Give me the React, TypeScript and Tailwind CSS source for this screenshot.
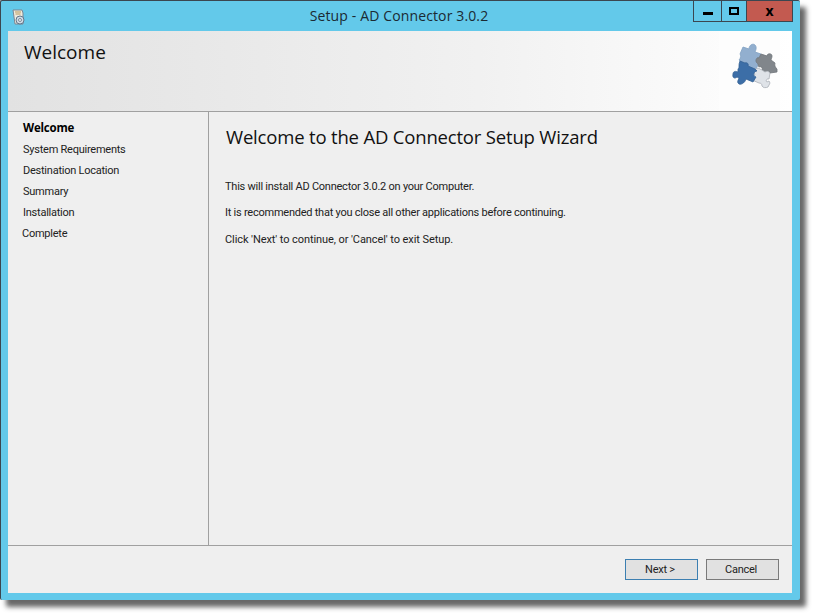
const steps = ["System Requirements", "Destination Location", "Summary", "Installation", "Complete"];
const font = "font-['Open_Sans',sans-serif]";
const small = "font-['Roboto',sans-serif] text-[11px] tracking-[-0.24px]";

function SetupIcon() {
  return (
    <svg width="16" height="18" viewBox="0 0 16 18" className="ml-[10px] mt-[7px]">
      <path d="M2 2h9l1 3v11H4z" fill="#eee9dc" stroke="#7b8794" />
      <path d="M4 4h6M4.500 6h5" stroke="#b99a5e" />
      <circle cx="9" cy="12" r="4" fill="#cfdbe6" stroke="#64778a" />
      <circle cx="9" cy="12" r="1.500" fill="#f4f6f8" stroke="#7c8b99" />
    </svg>
  );
}

function PuzzleIcon() {
  return (
    <svg width="60" height="60" viewBox="0 0 60 60">
      {/* light blue */}
      <path d="M18 9L24 11C24 7 28 5 30 7C32 9 31 12 30 14L36 16L34 20C32 19 31 21 31 23C31 25 34 26 33 27L30 33L22 29C23 26 20 24 18 25C17 25 16 26 16 24L14 22C16 20 16 17 15 16Z" fill="#92afcf" stroke="#7f9fc2" strokeWidth="0.8" />
      {/* gray */}
      <path d="M36 16L42 18C42 15 47 15 47 18C47 20 46 21 46 22L50 25C49 28 51 30 52 31L52 34L45 35C44 33 41 33 40 34L37 32C38 30 36 28 34 29L33 27C34 26 31 25 31 23C31 21 32 19 34 20Z" fill="#81868b" stroke="#6e7479" strokeWidth="0.8" />
      {/* white */}
      <path d="M33 30L37 32L40 34C41 33 44 33 45 35L44 41C42 40 40 43 42 44L44 43L45 45L43 49C41 50 38 50 37 48C37 46 36 45 34 45L27 42L30 36C28 35 29 31 31 31Z" fill="#dfe3e8" stroke="#a9afb6" strokeWidth="0.8" />
      {/* dark blue */}
      <path d="M15 23L20 25C22 24 24 26 23 28L30 31L32 33C29 33 27 38 31 39L28 44L21 41C20 45 15 48 13 45C12 43 14 41 14 40L12 39C10 41 7 40 8 36C8 33 11 33 13 34L13 31C15 30 13 27 15 23Z" fill="#3c6ea7" stroke="#336194" strokeWidth="0.8" />
    </svg>
  );
}

export default function App() {
  return (
    <div className={`w-[815px] h-[616px] bg-white ${font}`}>
      <div className="w-[800px] h-[600px] rounded-[2px] bg-[#63c9ea] border-l border-t border-[#3b4650] shadow-[6px_7px_5px_rgba(40,40,40,0.7)] flex flex-col">
        {/* Title bar */}
        <div className="h-[30px] flex shrink-0">
          <SetupIcon />
          <div className="flex-1 text-center text-[14px] leading-[30px] text-[#1b2a33] pl-[78px] tracking-[0.13px]">Setup - AD Connector 3.0.2</div>
          <div className="flex h-[21px] mr-[7px] border border-t-0 border-[#3b4650]">
            <div className="w-[28px] border-r border-[#3b4650] flex items-center justify-center">
              <div className="w-[10px] h-[3px] bg-black mt-[4px]" />
            </div>
            <div className="w-[25px] border-r border-[#3b4650] flex items-center justify-center">
              <div className="w-[10px] h-[8px] border-2 border-black" />
            </div>
            <div className="w-[45px] bg-[#c35a50] flex items-center justify-center text-[14px] font-bold text-black leading-none">x</div>
          </div>
        </div>

        {/* Client area */}
        <div className="ml-[7px] mr-[8px] flex-1 flex flex-col bg-[#efefef] min-h-0">
          <div className="h-[81px] shrink-0 border-b border-[#a0a0a0] bg-gradient-to-r from-[#e2e2e2] via-[#f1f1f1] via-60% to-white flex justify-between">
            <div className="pl-[16px] pt-[8px] text-[19px] leading-[27px] text-[#111]">Welcome</div>
            <div className="w-[61px] mr-[12px] bg-[#fdfdfd] pt-[7px] pl-[6px]">
              <PuzzleIcon />
            </div>
          </div>

          <div className="flex-1 flex min-h-0">
            <div className="w-[201px] shrink-0 border-r border-[#a0a0a0] pl-[15px] pt-[6px]">
              <div className="h-[21px] text-[11.500px] leading-[20px] font-bold text-black tracking-[-0.2px]">Welcome</div>
              {steps.map((s) => (
                <div key={s} className={`h-[21px] leading-[21px] text-[#222] ${small} ${s === "Complete" ? "-ml-px" : ""}`}>{s}</div>
              ))}
            </div>
            <div className="flex-1 pl-[16px] pt-[11px] text-[#222]">
              <h1 className="ml-[1px] text-[18.500px] leading-[27px] text-[#111] tracking-[-0.18px]">Welcome to the AD Connector Setup Wizard</h1>
              <p className={`mt-[29px] leading-[16px] ${small}`}>This will install AD Connector 3.0.2 on your Computer.</p>
              <p className={`mt-[10px] leading-[16px] ${small}`}>It is recommended that you close all other applications before continuing.</p>
              <p className="mt-[11px] leading-[16px] font-['Roboto',sans-serif] text-[11px] tracking-[-0.08px]">Click 'Next' to continue, or 'Cancel' to exit Setup.</p>
            </div>
          </div>

          <div className="h-[48px] shrink-0 border-t border-[#a0a0a0] flex justify-end gap-[8px] pr-[13px] pt-[13px]">
            <button className={`w-[73px] h-[21px] pr-[3px] bg-[#e1e1e1] border border-[#3c7fb1] leading-none text-[#222] ${small}`}>Next &gt;</button>
            <button className={`w-[73px] h-[21px] pr-[3px] bg-[#e1e1e1] border border-[#7a7a7a] leading-none text-[#222] ${small}`}>Cancel</button>
          </div>
        </div>
        <div className="h-[7px] shrink-0" />
      </div>
    </div>
  );
}
